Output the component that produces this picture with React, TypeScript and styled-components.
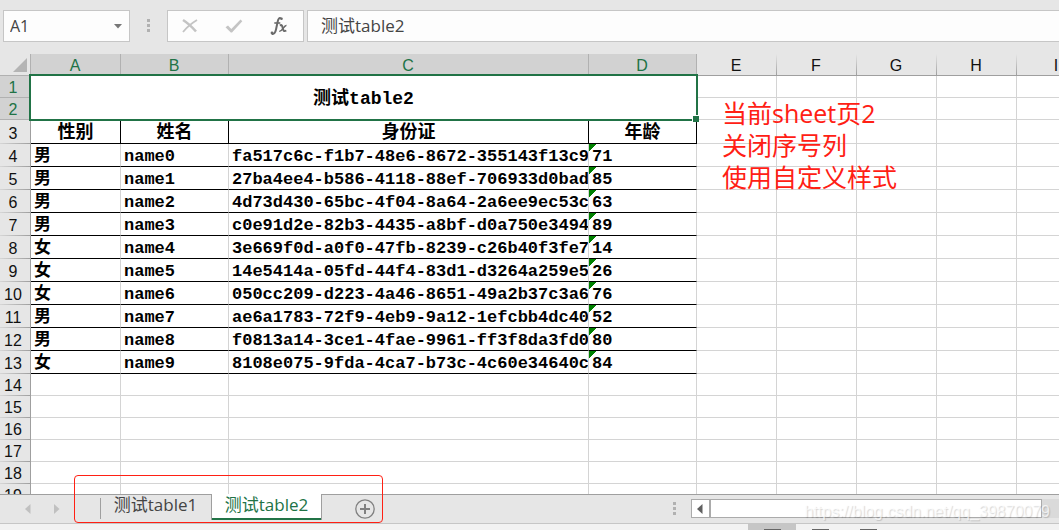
import React, { useEffect, useState } from 'react';
import styled, { createGlobalStyle, css } from 'styled-components';

const GlobalStyle = createGlobalStyle`
  * { box-sizing: border-box; }
  body { margin: 0; overflow: hidden; }
  button, input { font: inherit; color: inherit; margin: 0; padding: 0; border: 0; background: none; outline: 0; }
`;

const uiFont = `'Open Sans', 'Noto Sans CJK SC', sans-serif`;
const headingFont = `'Liberation Sans', 'Noto Sans CJK SC', sans-serif`;
const cellFont = `'Liberation Mono', 'Noto Sans CJK SC', monospace`;
const green = '#217346';
const gridLine = '#d4d4d4';

const Window = styled.div`
  position: relative;
  display: flex;
  flex-direction: column;
  height: 100vh;
  overflow: hidden;
  background: #e6e6e6;
  color: #444;
  font-family: ${uiFont};
`;

const FormulaBar = styled.header`
  display: flex;
  flex: none;
  height: 54px;
  padding: 10px 0 12px 3px;
`;

const Field = styled.div`
  display: flex;
  align-items: center;
  border: 1px solid #c6c6c6;
  background: #fdfdfd;
`;

const NameBox = styled(Field)`
  width: 127px;
  padding: 0 7px 0 6px;
  font-size: 16px;
  input { flex: 1; min-width: 0; }
  button { display: flex; }
`;

const Dots = styled.span`
  display: flex;
  flex-direction: column;
  justify-content: center;
  gap: 2px;
  flex: none;
  i { width: 3px; height: 3px; background: #b1b1b1; }
`;

const BarDots = styled(Dots)`
  width: 37px;
  align-items: center;
  padding-bottom: 2px;
`;

const Actions = styled(Field)`
  width: 137px;
  margin-right: 3px;
  padding-right: 2px;
  button { display: flex; flex: 1; justify-content: center; }
`;

const FormulaField = styled(Field)`
  flex: 1;
  border-right: 0;
  padding: 0 0 4px 13px;
  font-size: 17px;
  input { flex: 1; min-width: 0; }
`;

const Sheet = styled.main`
  position: relative;
  flex: 1;
  min-height: 0;
  overflow: hidden;
  background: #fff;
`;

const Grid = styled.table`
  table-layout: fixed;
  border-collapse: separate;
  border-spacing: 0;
  width: 0;
  th, td { padding: 0; }
`;

const Corner = styled.th`
  background: #e6e6e6;
  border-right: 1px solid #b1b1b1;
  border-bottom: 1px solid #b1b1b1;
  svg { display: block; margin-left: 13px; }
`;

const selectedHeading = css`
  background: #d2d2d2;
  color: ${green};
`;

const ColumnHeading = styled.th<{ $selected: boolean }>`
  height: 22px;
  color: #111;
  background: linear-gradient(#e6e6e6, #9f9f9f) right / 1px 100% no-repeat #e6e6e6;
  border-bottom: 1px solid #9f9f9f;
  font: 16px/19px ${headingFont};
  ${(p) => p.$selected && selectedHeading}
  ${(p) => p.$selected && 'box-shadow: inset -1px 0 #b1b1b1;'}
  && { padding: 2px 2px 0 0; }
`;

const RowHeading = styled.th<{ $selected?: boolean }>`
  color: #111;
  background: linear-gradient(90deg, #d6d6d6, #9f9f9f) bottom / 100% 1px no-repeat #e6e6e6;
  border-right: 1px solid #9f9f9f;
  font: 16px/20px ${headingFont};
  vertical-align: bottom;
  text-align: center;
  ${(p) => p.$selected && selectedHeading}
  ${(p) => p.$selected && 'box-shadow: inset 0 -1px #b1b1b1;'}
  && { padding-right: 4px; }
`;

const Row = styled.tr<{ $height: number }>`
  height: ${(p) => p.$height}px;
`;

const Cell = styled.td`
  position: relative;
  overflow: hidden;
  white-space: nowrap;
  color: #000;
  border-right: 1px solid ${gridLine};
  border-bottom: 1px solid ${gridLine};
  font: bold 17px/18px ${cellFont};
`;

const DataCell = styled(Cell)`
  border-bottom-color: #000;
  && { padding: 4px 0 0 3px; }
`;

const LabelCell = styled(Cell)`
  border-color: #000;
  font-size: 18px;
  line-height: 20px;
  text-align: center;
  && { padding-top: 2px; }
`;

const TitleCell = styled(Cell)`
  overflow: visible;
  font-size: 18px;
  text-align: center;
  && { padding-top: 2px; }
`;

const Selection = styled.span`
  position: absolute;
  inset: -2px;
  z-index: 1;
  border: 2px solid ${green};
  &::after {
    content: '';
    position: absolute;
    right: -3px;
    bottom: -3px;
    width: 6px;
    height: 6px;
    background: ${green};
    border-left: 1px solid #fff;
    border-top: 1px solid #fff;
  }
`;

const TextNumberMark = styled.span`
  position: absolute;
  left: 0;
  top: 0;
  width: 8px;
  height: 8px;
  background: linear-gradient(135deg, #008000 50%, transparent 50%);
`;

const Note = styled.p`
  position: absolute;
  left: 722px;
  top: 43px;
  margin: 0;
  color: #ff2014;
  font-size: 25px;
  line-height: 32px;
`;

const TabBar = styled.footer`
  display: flex;
  flex: none;
  height: 30px;
  border-top: 1px solid #9f9f9f;
  border-bottom: 1px solid #c6c6c6;
  font-size: 17px;
`;

const TabNav = styled.div`
  display: flex;
  gap: 23px;
  width: 100px;
  padding-left: 25px;
  button { display: flex; align-items: center; }
`;

const Tab = styled.button<{ $active?: boolean }>`
  height: 25px;
  min-width: 111px;
  padding-bottom: 5px;
  line-height: 20px;
  white-space: nowrap;
  ${(p) =>
    p.$active
      ? css`
          margin-top: -1px;
          height: 26px;
          color: ${green};
          background: #fff;
          border: solid #9f9f9f;
          border-width: 0 1px;
          box-shadow: inset 0 -2px ${green};
        `
      : css`
          background: linear-gradient(#9f9f9f, #9f9f9f) 0 3px / 1px 21px no-repeat;
        `}
`;

const AddSheet = styled.button`
  display: flex;
  align-items: center;
  margin-left: 33px;
`;

const Scroller = styled.div`
  display: flex;
  flex: 1;
  margin-left: auto;
  max-width: 386px;
`;

const ScrollDots = styled(Dots)`
  width: 18px;
  padding-bottom: 1px;
`;

const Track = styled.div`
  display: flex;
  flex: 1;
  height: 19px;
  margin-top: 4px;
  background: #dadada;
`;

const ScrollButton = styled.button`
  display: flex;
  align-items: center;
  width: 19px;
  padding-left: 5px;
  border: 1px solid #ababab;
  background: #fff;
`;

const Thumb = styled.div`
  flex: 1;
  margin-right: 17px;
  border: 1px solid #ababab;
  background: #fff;
`;

const Highlight = styled.div`
  position: absolute;
  left: 74px;
  bottom: 7px;
  width: 309px;
  height: 48px;
  border: 1px solid #ff2014;
  border-radius: 4px;
  pointer-events: none;
`;

const Watermark = styled.span`
  position: absolute;
  right: 9px;
  bottom: 7px;
  color: rgba(255, 255, 255, 0.7);
  font: 16px/22px ${headingFont};
  text-shadow: 1px 1px 1px rgba(0, 0, 0, 0.16);
`;

const StatusBar = styled.div`
  display: flex;
  flex: none;
  justify-content: flex-end;
  height: 6px;
  padding-right: 167px;
  background: #f2f2f2;
`;

const ViewButton = styled.button<{ $active?: boolean }>`
  display: flex;
  align-items: flex-end;
  justify-content: center;
  width: 48px;
  background: ${(p) => (p.$active ? '#c6c6c6' : 'none')};
  &::after { content: ''; width: 17px; height: 1px; background: #666; }
`;

const dataColumns = [
  { name: 'A', width: 90 },
  { name: 'B', width: 108 },
  { name: 'C', width: 360 },
  { name: 'D', width: 108 },
];

const people = [
  ['男', 'name0', 'fa517c6c-f1b7-48e6-8672-355143f13c9d', '71'],
  ['男', 'name1', '27ba4ee4-b586-4118-88ef-706933d0bada', '85'],
  ['男', 'name2', '4d73d430-65bc-4f04-8a64-2a6ee9ec53c3', '63'],
  ['男', 'name3', 'c0e91d2e-82b3-4435-a8bf-d0a750e34942', '89'],
  ['女', 'name4', '3e669f0d-a0f0-47fb-8239-c26b40f3fe75', '14'],
  ['女', 'name5', '14e5414a-05fd-44f4-83d1-d3264a259e56', '26'],
  ['女', 'name6', '050cc209-d223-4a46-8651-49a2b37c3a67', '76'],
  ['男', 'name7', 'ae6a1783-72f9-4eb9-9a12-1efcbb4dc406', '52'],
  ['男', 'name8', 'f0813a14-3ce1-4fae-9961-ff3f8da3fd0c', '80'],
  ['女', 'name9', '8108e075-9fda-4ca7-b73c-4c60e34640c4', '84'],
];

const columnName = (n: number): string =>
  (n >= 26 ? columnName(Math.floor(n / 26) - 1) : '') + String.fromCharCode(65 + (n % 26));

// Only the empty columns and rows that fit in the window are rendered.
const measure = () => ({
  extraColumns: Math.max(1, Math.ceil((window.innerWidth - 697) / 80)),
  extraRows: Math.max(1, Math.ceil((window.innerHeight - 410) / 22)),
});

const ThreeDots = () => (
  <>
    <i />
    <i />
    <i />
  </>
);

export default function App() {
  const [visible, setVisible] = useState(measure);
  useEffect(() => {
    const update = () => setVisible(measure());
    window.addEventListener('resize', update);
    return () => window.removeEventListener('resize', update);
  }, []);

  const plainColumns = Array.from({ length: visible.extraColumns }, (_, i) => ({
    name: columnName(i + 4),
    width: 80,
  }));
  const columns = [...dataColumns, ...plainColumns];
  const emptyRows = Array.from({ length: visible.extraRows }, (_, i) => i + 14);
  const plainCells = plainColumns.map((c) => <Cell key={c.name} />);

  return (
    <Window>
      <GlobalStyle />
      <FormulaBar>
        <NameBox>
          <input aria-label="Name box" defaultValue="A1" />
          <button aria-label="Open name list">
            <svg width="8" height="5" viewBox="0 0 8 5"><path d="M0 0h8L4 4.5z" fill="#777" /></svg>
          </button>
        </NameBox>
        <BarDots><ThreeDots /></BarDots>
        <Actions>
          <button aria-label="Cancel">
            <svg width="18" height="16" viewBox="0 0 18 16">
              <path d="M2 2C6 4.500 11 9 15 13.500" fill="none" stroke="#c4c4c4" strokeWidth="2.600" />
              <path d="M16 2C11 5 6 9 2 14" fill="none" stroke="#c4c4c4" strokeWidth="1.800" />
            </svg>
          </button>
          <button aria-label="Enter">
            <svg width="18" height="16" viewBox="0 0 18 16">
              <path d="M.5 9.300 3 7.500 6.300 11 15.500 1.500 17.300 3.200 7 14.500H5.800z" fill="#c4c4c4" />
            </svg>
          </button>
          <button aria-label="Insert function">
            <svg width="18" height="20" viewBox="0 0 18 20" fill="none" stroke="#6a6a6a">
              <path d="M11 2.500C9.300 1.200 8.200 3 7.600 6L6 13.500C5.300 16.800 3.800 18.600 2 17.800" strokeWidth="2" />
              <circle cx="11.500" cy="2.800" r="1.300" fill="#6a6a6a" stroke="none" />
              <circle cx="2" cy="17" r="1.400" fill="#6a6a6a" stroke="none" />
              <path d="M4.300 7h6" strokeWidth="1.600" />
              <path d="M9.800 9.500C12 8.300 12.300 10 12.800 12.300S13.800 16 16.300 14.500" strokeWidth="2" />
              <path d="M16.500 9.500C14 9 12 16 9.300 15.300" strokeWidth="1.500" />
            </svg>
          </button>
        </Actions>
        <FormulaField>
          <input aria-label="Formula" defaultValue="测试table2" />
        </FormulaField>
      </FormulaBar>

      <Sheet>
        <Grid>
          <colgroup>
            <col style={{ width: 31 }} />
            {columns.map((c) => (
              <col key={c.name} style={{ width: c.width }} />
            ))}
          </colgroup>
          <thead>
            <tr>
              <Corner aria-label="Select all">
                <svg width="14" height="14" viewBox="0 0 14 14"><path d="M14 0v14H0z" fill="#b4b4b4" /></svg>
              </Corner>
              {columns.map((c, i) => (
                <ColumnHeading key={c.name} scope="col" $selected={i < 4}>{c.name}</ColumnHeading>
              ))}
            </tr>
          </thead>
          <tbody>
            <Row $height={22}>
              <RowHeading scope="row" $selected>1</RowHeading>
              <TitleCell colSpan={4} rowSpan={2}>
                测试table2
                <Selection />
              </TitleCell>
              {plainCells}
            </Row>
            <Row $height={22}>
              <RowHeading scope="row" $selected>2</RowHeading>
              {plainCells}
            </Row>
            <Row $height={24}>
              <RowHeading scope="row">3</RowHeading>
              {['性别', '姓名', '身份证', '年龄'].map((label) => (
                <LabelCell key={label}>{label}</LabelCell>
              ))}
              {plainCells}
            </Row>
            {people.map((person, i) => (
              <Row key={person[1]} $height={23}>
                <RowHeading scope="row">{i + 4}</RowHeading>
                {person.map((value, column) => (
                  <DataCell key={column}>
                    {column === 3 && <TextNumberMark />}
                    {value}
                  </DataCell>
                ))}
                {plainCells}
              </Row>
            ))}
            {emptyRows.map((n) => (
              <Row key={n} $height={22}>
                <RowHeading scope="row">{n}</RowHeading>
                {columns.map((c) => (
                  <Cell key={c.name} />
                ))}
              </Row>
            ))}
          </tbody>
        </Grid>
        <Note>
          当前sheet页2
          <br />
          关闭序号列
          <br />
          使用自定义样式
        </Note>
      </Sheet>

      <TabBar>
        <TabNav>
          <button aria-label="Previous sheet">
            <svg width="6" height="10" viewBox="0 0 6 10"><path d="M5.500 0v10L0 5z" fill="#c0c0c0" /></svg>
          </button>
          <button aria-label="Next sheet">
            <svg width="6" height="10" viewBox="0 0 6 10"><path d="M0 0v10l5.500-5z" fill="#c0c0c0" /></svg>
          </button>
        </TabNav>
        <Tab>测试table1</Tab>
        <Tab $active>测试table2</Tab>
        <AddSheet aria-label="New sheet">
          <svg width="20" height="20" viewBox="0 0 20 20" fill="none" stroke="#808080">
            <circle cx="10" cy="10" r="9.200" strokeWidth="1.300" />
            <path d="M10 5v10M5 10h10" strokeWidth="2" />
          </svg>
        </AddSheet>
        <Scroller>
          <ScrollDots><ThreeDots /></ScrollDots>
          <Track>
            <ScrollButton aria-label="Scroll left">
              <svg width="6" height="10" viewBox="0 0 6 10"><path d="M5.500 0v10L0 5z" fill="#606060" /></svg>
            </ScrollButton>
            <Thumb />
          </Track>
        </Scroller>
      </TabBar>
      <StatusBar>
        <ViewButton $active aria-label="Normal view" />
        <ViewButton aria-label="Page layout view" />
        <ViewButton aria-label="Page break preview" />
      </StatusBar>
      <Highlight />
      <Watermark>https://blog.csdn.net/qq_39870079</Watermark>
    </Window>
  );
}
